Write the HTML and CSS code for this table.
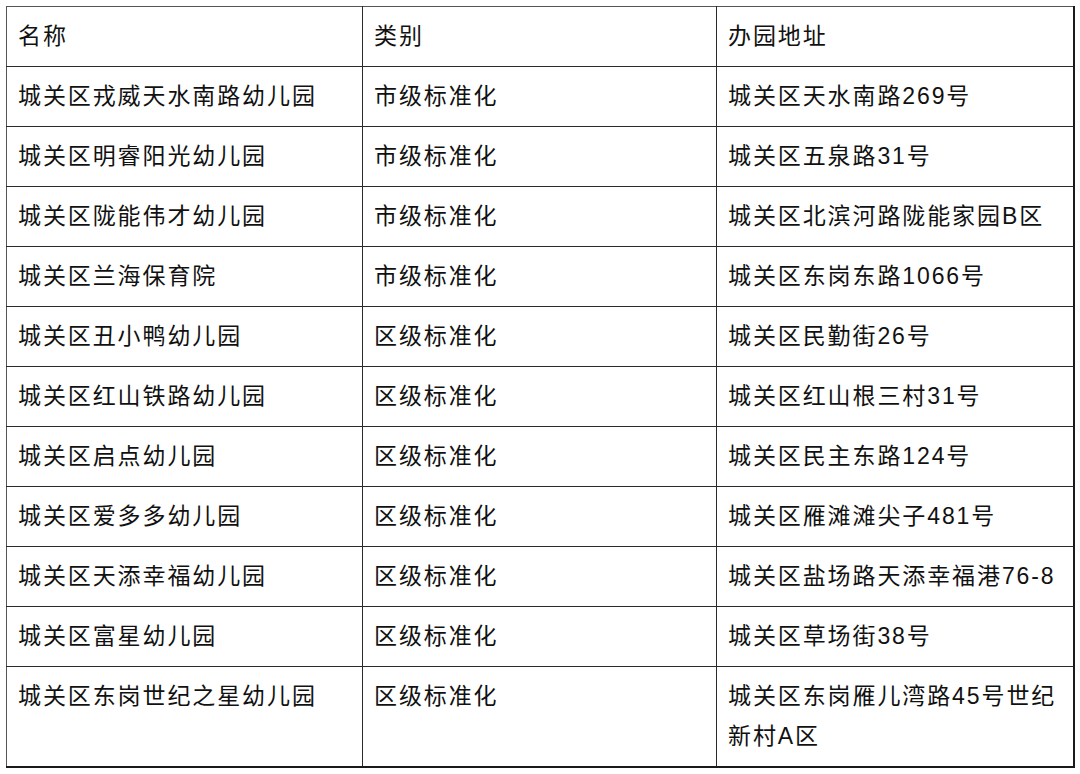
FILE: index.html
```html
<!DOCTYPE html>
<html lang="zh-CN">
<head>
<meta charset="utf-8">
<title>幼儿园名单</title>
<link rel="stylesheet" href="styles.css">
</head>
<body>
<table class="list">
  <colgroup><col class="c1"><col class="c2"><col class="c3"></colgroup>
  <tr><td>名称</td><td>类别</td><td>办园地址</td></tr>
  <tr><td>城关区戎威天水南路幼儿园</td><td>市级标准化</td><td>城关区天水南路269号</td></tr>
  <tr><td>城关区明睿阳光幼儿园</td><td>市级标准化</td><td>城关区五泉路31号</td></tr>
  <tr><td>城关区陇能伟才幼儿园</td><td>市级标准化</td><td>城关区北滨河路陇能家园B区</td></tr>
  <tr><td>城关区兰海保育院</td><td>市级标准化</td><td>城关区东岗东路1066号</td></tr>
  <tr><td>城关区丑小鸭幼儿园</td><td>区级标准化</td><td>城关区民勤街26号</td></tr>
  <tr><td>城关区红山铁路幼儿园</td><td>区级标准化</td><td>城关区红山根三村31号</td></tr>
  <tr><td>城关区启点幼儿园</td><td>区级标准化</td><td>城关区民主东路124号</td></tr>
  <tr><td>城关区爱多多幼儿园</td><td>区级标准化</td><td>城关区雁滩滩尖子481号</td></tr>
  <tr><td>城关区天添幸福幼儿园</td><td>区级标准化</td><td>城关区盐场路天添幸福港76-8</td></tr>
  <tr><td>城关区富星幼儿园</td><td>区级标准化</td><td>城关区草场街38号</td></tr>
  <tr class="last"><td>城关区东岗世纪之星幼儿园</td><td>区级标准化</td><td>城关区东岗雁儿湾路45号世纪新村A区</td></tr>
</table>
</body>
</html>
```
FILE: styles.css
```css
html, body {
  margin: 0;
  background: #ffffff;
}
body {
  padding: 6px 0 0 6px;
  font-family: "Liberation Sans", "Noto Sans CJK SC", sans-serif;
  color: #111111;
}
.list {
  border-collapse: collapse;
  table-layout: fixed;
  width: 1067px;
  border-top: 1px solid #555;
  border-left: 1px solid #555;
  border-right: 2px solid #1a1a1a;
  border-bottom: 2px solid #1a1a1a;
}
.c1 { width: 356px; }
.c2 { width: 354px; }
.c3 { width: 357px; }
.list td {
  border: 1px solid #2a2a2a;
  padding: 9px 11px 10px 11px;
  height: 40px;
  line-height: 40px;
  font-size: 23px;
  letter-spacing: 1.9px;
  vertical-align: top;
  text-align: left;
}
.list tr:first-child td { border-top-color: #555; }
.list td:first-child { border-left-color: #555; }
.list td:last-child { border-right: 2px solid #1a1a1a; }
.list tr.last td { border-bottom: 2px solid #1a1a1a; }
```
